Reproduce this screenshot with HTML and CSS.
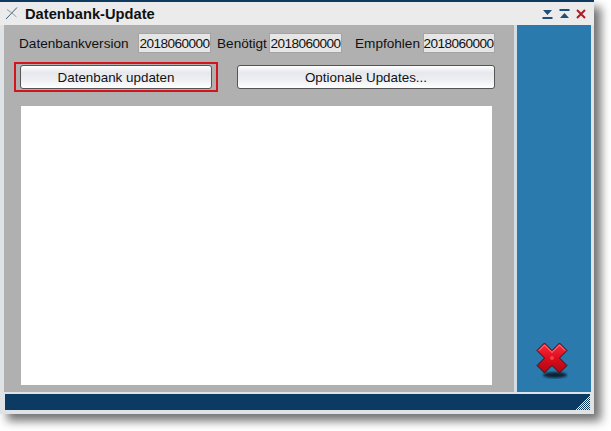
FILE: index.html
```html
<!DOCTYPE html>
<html lang="de">
<head>
    <meta charset="UTF-8">
    <title>Datenbank-Update</title>
    <link rel="stylesheet" href="styles.css">
</head>
<body>
    <div class="window">
        <div class="titlebar">
            <svg class="app-icon" width="16" height="16" viewBox="0 0 16 16">
                <path d="M1 13 L12 1.5" stroke="#3f5f76" stroke-width="1" fill="none"/>
                <path d="M2 3.5 L7 7 L11.5 11" stroke="#8a9dab" stroke-width="1" fill="none"/>
            </svg>
            <span class="title">Datenbank-Update</span>
            <div class="window-buttons">
                <svg width="11" height="10" viewBox="0 0 11 10"><path d="M1 1 H10 L5.5 6 Z M0.5 8 H10.5 V10 H0.5 Z" fill="#1d4f78"/></svg>
                <svg width="11" height="10" viewBox="0 0 11 10"><path d="M0.5 0 H10.5 V2 H0.5 Z M1 9 H10 L5.5 4 Z" fill="#1d4f78"/></svg>
                <svg width="10" height="10" viewBox="0 0 10 10"><path d="M1 1 L9 9 M9 1 L1 9" stroke="#b01c22" stroke-width="2" fill="none"/></svg>
            </div>
        </div>

        <div class="main">
            <div class="panel">
                <div class="version-row">
                    <label class="label-db">Datenbankversion</label>
                    <div class="field">2018060000</div>
                    <label class="label-need">Benötigt</label>
                    <div class="field">2018060000</div>
                    <label class="label-rec">Empfohlen</label>
                    <div class="field field-last">2018060000</div>
                </div>
                <div class="button-row">
                    <div class="highlight">
                        <button class="btn btn-update">Datenbank updaten</button>
                    </div>
                    <button class="btn btn-optional">Optionale Updates...</button>
                </div>
                <div class="log"></div>
            </div>
            <div class="side">
                <svg class="close-icon" width="34" height="38" viewBox="0 0 34 38">
                    <defs>
                        <linearGradient id="red" x1="0" y1="0" x2="0" y2="1">
                            <stop offset="0" stop-color="#f4303e"/>
                            <stop offset="0.5" stop-color="#e00c1c"/>
                            <stop offset="1" stop-color="#a80812"/>
                        </linearGradient>
                        <filter id="blur"><feGaussianBlur stdDeviation="1.3"/></filter>
                    </defs>
                    <ellipse cx="19" cy="33" rx="12" ry="3" fill="#0c2436" filter="url(#blur)"/>
                    <path d="M1 8.5 L8.5 1 L16 8.5 L23.5 1 L31 8.5 L23.5 16 L31 23.5 L23.5 31 L16 23.5 L8.5 31 L1 23.5 L8.5 16 Z" fill="url(#red)" stroke="#3a1014" stroke-width="1" stroke-linejoin="round"/>
                    <path d="M3 8.5 L8.5 3 L16 10.5 L23.5 3 L29 8.5" fill="none" stroke="#ff8a92" stroke-width="1"/>
                    <circle cx="16" cy="16" r="2" fill="#f2404c"/>
                </svg>
            </div>
        </div>

        <div class="statusbar">
            <svg class="grip" width="14" height="14" viewBox="0 0 14 14">
                <path d="M14 0 L0 14 M14 2 L2 14 M14 4 L4 14 M14 6 L6 14 M14 8 L8 14 M14 10 L10 14 M14 12 L12 14" stroke="#e8eef2" stroke-width="1" fill="none"/>
            </svg>
        </div>
    </div>
</body>
</html>
```

FILE: styles.css
```css
* {
    box-sizing: border-box;
    margin: 0;
    padding: 0;
    font-family: "Liberation Sans", Arial, sans-serif;
}

body {
    background-color: #fff;
    width: 611px;
    height: 431px;
    overflow: hidden;
}

.window {
    width: 594px;
    height: 414px;
    display: flex;
    flex-direction: column;
    background: #dfe3e5;
    border-top: 2px solid #0d3a5e;
    box-shadow: 7px 7px 9px rgba(0, 0, 0, 0.55);
}

.titlebar {
    height: 23px;
    display: flex;
    align-items: center;
    padding: 0 8px 0 5px;
    background: #ebebeb;
}

.app-icon {
    margin-right: 4px;
}

.title {
    font-size: 14.7px;
    font-weight: bold;
    color: #111;
}

.window-buttons {
    margin-left: auto;
    display: flex;
    gap: 6px;
    align-items: center;
}

.main {
    flex: 1;
    display: flex;
    min-height: 0;
    padding: 0 3px 0 4px;
}

.panel {
    width: 510px;
    background: #b0b0b0;
    padding: 8px 0 0 0;
}

.version-row {
    display: flex;
    align-items: flex-start;
    height: 21px;
    font-size: 13.6px;
    line-height: 22px;
    color: #111;
}

.label-db {
    margin-left: 15px;
    width: 119px;
}

.label-need {
    margin-left: 6px;
    width: 52px;
}

.label-rec {
    margin-left: 13px;
    width: 67.5px;
}

.field {
    width: 73px;
    height: 20px;
    line-height: 19px;
    font-size: 13.6px;
    letter-spacing: -0.56px;
    text-align: center;
    color: #111;
    background: #e6e6e6;
    border: 1px solid #a4a4a4;
}

.field-last {
    width: 72px;
}

.button-row {
    display: flex;
    align-items: center;
    margin-top: 8px;
    height: 30px;
}

.highlight {
    margin-left: 10px;
    width: 204px;
    height: 30px;
    padding: 1px 4px;
    border: 2px solid #d4141c;
}

.btn {
    display: block;
    height: 24px;
    font-size: 13.4px;
    color: #111;
    border: 1px solid #555;
    border-radius: 3px;
    background: linear-gradient(#fff 0, #e6e8ee 30%, #eceef2 60%, #fff 100%);
}

.btn-update {
    width: 100%;
}

.btn-optional {
    margin-left: 19px;
    width: 258px;
}

.log {
    width: 471px;
    height: 279px;
    margin: 14px 0 0 17px;
    background: #fff;
}

.side {
    flex: 1;
    border-left: 3px solid #d4dde2;
    background: #2a7aae;
    display: flex;
    justify-content: center;
    align-items: flex-end;
    padding: 0 2px 12px 0;
}

.statusbar {
    height: 16px;
    margin: 2px 4px 4px 5px;
    background: #0b3a63;
    display: flex;
    justify-content: flex-end;
    align-items: flex-end;
}
```
